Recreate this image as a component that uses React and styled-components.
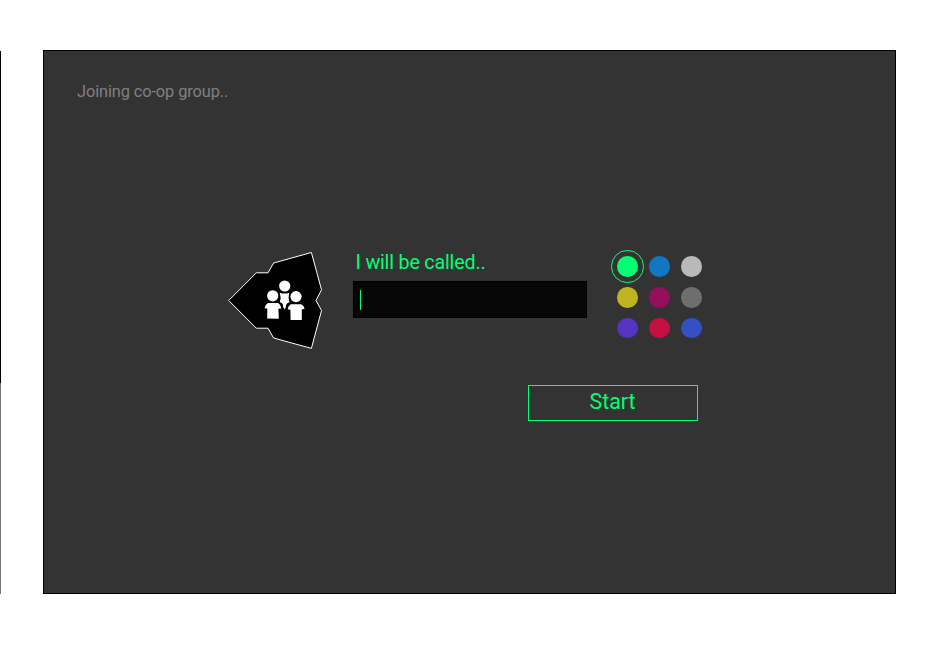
import React from 'react';
import styled, { createGlobalStyle } from 'styled-components';

const GlobalStyle = createGlobalStyle`
  * { box-sizing: border-box; }
  html, body { margin: 0; background: #fff; }
  body { font-family: Roboto, "Liberation Sans", sans-serif; overflow: hidden; }
`;

const Page = styled.div`
  display: flex;
  align-items: flex-start;
  gap: 42px;
  width: 930px;
  height: 646px;
  padding-top: 50px;
`;

const PreviousScreen = styled.div`
  width: 1px;
  height: 543px;
  margin-top: 1px;
  background: linear-gradient(#000 332px, #777 332px);
`;

const Screen = styled.main`
  width: 853px;
  height: 544px;
  border: 1px solid #000;
  background: #333;
`;

const Status = styled.div`
  height: 194px;
  padding: 30px 0 0 33px;
  font-size: 16.4px;
  line-height: 21px;
  letter-spacing: -0.12px;
  color: #808080;
`;

const Form = styled.form`
  display: flex;
  align-items: flex-start;
  margin-left: 176px;
`;

const GroupBadge = styled.svg`
  width: 110px;
  height: 110px;
  flex: none;
`;

const NameField = styled.label`
  display: flex;
  flex-direction: column;
  width: 234px;
  margin-left: 23px;
  padding-top: 6px;
`;

const Prompt = styled.span`
  height: 30px;
  padding-left: 2.5px;
  font-size: 19.7px;
  line-height: 24px;
  letter-spacing: -0.18px;
  color: #00ff72;
`;

const NameInput = styled.div`
  display: flex;
  align-items: center;
  height: 37px;
  padding-left: 6px;
  border: 1px solid #000;
  background: #070707;
`;

const Caret = styled.span`
  width: 1px;
  height: 20px;
  background: #00ff72;
`;

const Palette = styled.div`
  display: grid;
  grid-template-columns: repeat(3, 32.15px);
  grid-template-rows: repeat(3, 30.85px);
  place-items: center;
  margin: 6px 0 0 24.2px;
`;

const Swatch = styled.span`
  width: 20.5px;
  height: 20.5px;
  border-radius: 50%;
  background: ${(p) => p.$color};
  outline: ${(p) => (p.$selected ? '1px solid #00ff72' : 'none')};
  outline-offset: 5px;
`;

const StartButton = styled.button`
  display: block;
  width: 170px;
  height: 36px;
  margin: 30px 0 0 484px;
  padding: 0 1px 2px 0;
  border: 1px solid #00ff72;
  background: transparent;
  color: #00ff72;
  font: 21.4px/30px Roboto, "Liberation Sans", sans-serif;
  letter-spacing: -0.05px;
`;

const colors = [
  '#00ff72', '#1177c4', '#b9b9b9',
  '#c1b422', '#930f5c', '#6e6e6e',
  '#5733c1', '#c40f42', '#3351c4',
];

function Badge() {
  return (
    <GroupBadge viewBox="220 245 110 110">
      <path
        d="M228.7 300.5 256.3 272.8H268L273.6 263 311.4 252.5 321.5 289.8 316 300.5 321.5 310.6 311.4 348.4 273.6 338 268 328.2H256.3Z"
        fill="#000"
        stroke="#fff"
        strokeWidth="1"
      />
      <g fill="#fff">
        <circle cx="284.7" cy="286" r="5.6" />
        <path d="M279.8 292.7Q284.7 294.4 289.3 292.7Q287.8 298 289.6 302.3Q286.3 303.2 286 305.8Q286 308.5 284.3 309.2Q282.8 307.5 282.9 304.5Q282.4 303.2 279.9 302Q281.4 297.7 279.8 292.7Z" />
        <circle cx="272.7" cy="295.8" r="5.6" />
        <path d="M268 303H277.8Q280.6 304.3 281.2 308.4L278.4 308.8 278.8 318.7 267.2 318.4 267.3 308.5 264.5 308.2Q265 304.6 268 303Z" />
        <circle cx="296" cy="296.6" r="5.6" />
        <path d="M290.8 304.2H300.8Q303.7 305 304.6 308.8L301.8 309.5 301.8 320H290.6L290.4 309.8 287.6 309.3Q288.2 305.6 290.8 304.2Z" />
      </g>
    </GroupBadge>
  );
}

export default function App() {
  return (
    <>
      <GlobalStyle />
      <Page>
        <PreviousScreen />
        <Screen>
          <Status>Joining co-op group..</Status>
          <Form>
            <Badge />
            <NameField>
              <Prompt>I will be called..</Prompt>
              <NameInput><Caret /></NameInput>
            </NameField>
            <Palette>
              {colors.map((color, i) => (
                <Swatch key={color} $color={color} $selected={i === 0} />
              ))}
            </Palette>
          </Form>
          <StartButton type="button">Start</StartButton>
        </Screen>
      </Page>
    </>
  );
}
